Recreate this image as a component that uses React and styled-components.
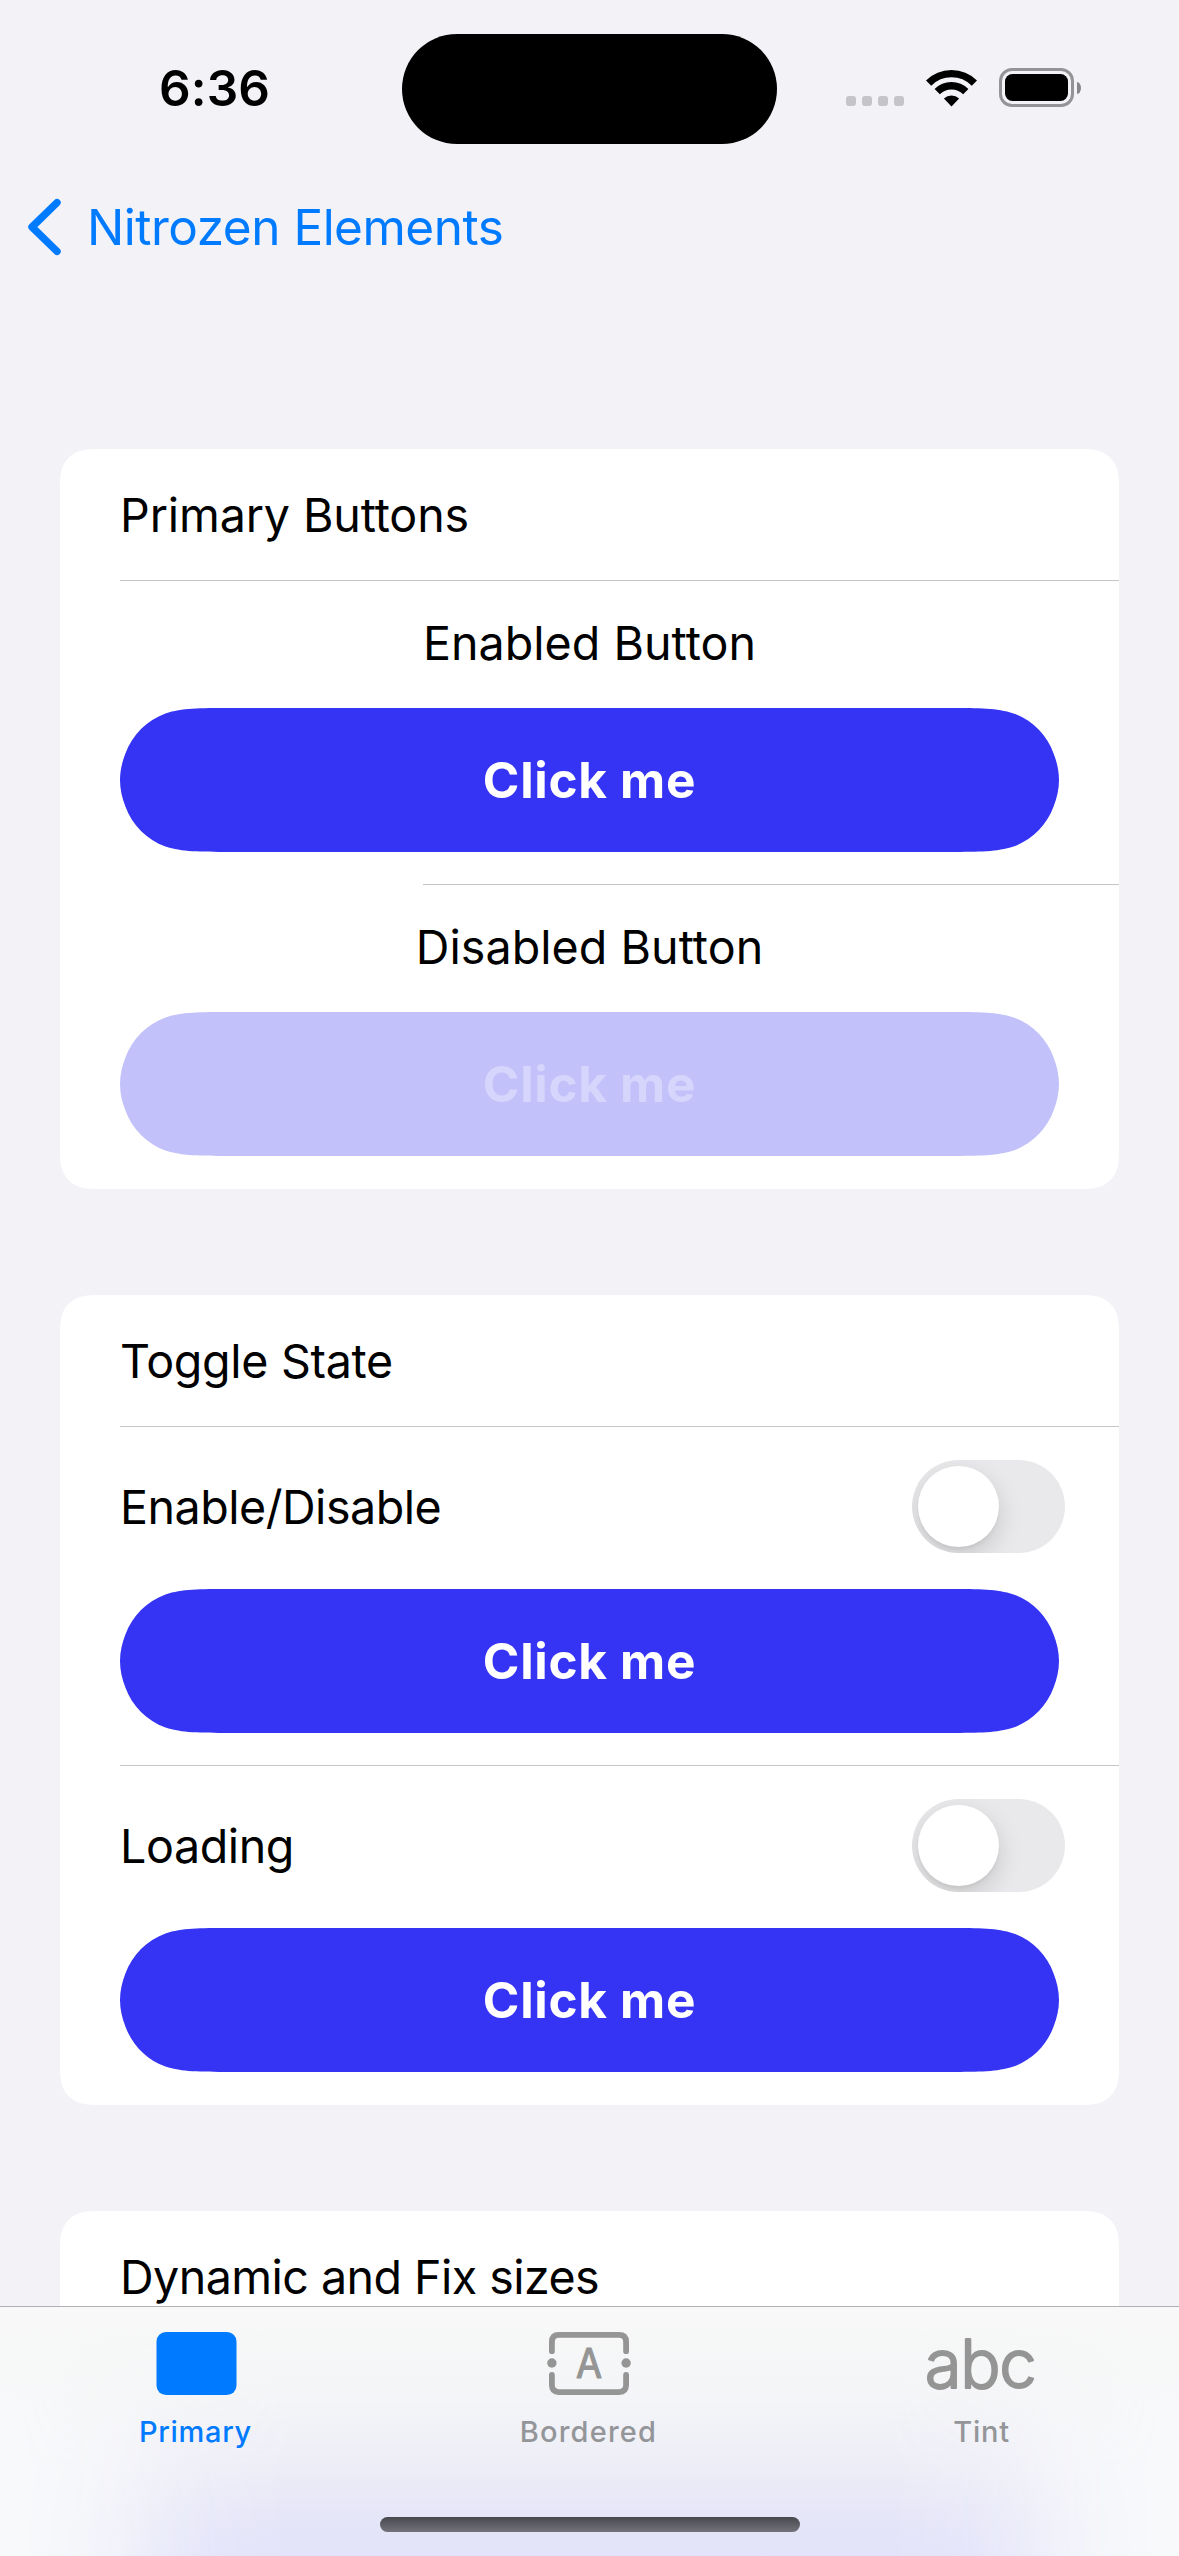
import React, { useState } from "react";
import styled, { createGlobalStyle } from "styled-components";

/* Continuous-corner outline, as iOS draws its rounded rectangles. */
function continuousRect(w, h, r) {
  const e = 1.52866 * r;
  const a = 1.08849 * r;
  const b = 0.86841 * r;
  const c = 0.63149 * r;
  const d = 0.07491 * r;
  const f = 0.37282 * r;
  const g = 0.16906 * r;
  /* A capsule has no room for the long vertical ease, so its ends stay round. */
  const capsule = h / 2 < e;
  const ey = capsule ? h / 2 : e;
  const ay = capsule ? 0.874 * r : a;
  const by = capsule ? 0.749 * r : b;
  const bx = capsule ? 0.0286 * r : 0;
  return [
    `M ${e} 0 L ${w - e} 0`,
    `C ${w - a} 0 ${w - b} 0 ${w - c} ${d}`,
    `C ${w - f} ${g} ${w - g} ${f} ${w - d} ${c}`,
    `C ${w - bx} ${by} ${w} ${ay} ${w} ${ey}`,
    `L ${w} ${h - ey}`,
    `C ${w} ${h - ay} ${w - bx} ${h - by} ${w - d} ${h - c}`,
    `C ${w - g} ${h - f} ${w - f} ${h - g} ${w - c} ${h - d}`,
    `C ${w - b} ${h} ${w - a} ${h} ${w - e} ${h}`,
    `L ${e} ${h}`,
    `C ${a} ${h} ${b} ${h} ${c} ${h - d}`,
    `C ${f} ${h - g} ${g} ${h - f} ${d} ${h - c}`,
    `C ${bx} ${h - by} 0 ${h - ay} 0 ${h - ey}`,
    `L 0 ${ey}`,
    `C 0 ${ay} ${bx} ${by} ${d} ${c}`,
    `C ${g} ${f} ${f} ${g} ${c} ${d}`,
    `C ${b} 0 ${a} 0 ${e} 0 Z`,
  ].join(" ");
}

const GlobalStyle = createGlobalStyle`
  * { box-sizing: border-box; }
  body {
    margin: 0;
    background: #f2f2f7;
    font-family: Inter, "Liberation Sans", sans-serif;
    color: #000;
  }
`;

const Screen = styled.div`
  position: relative;
  width: 1179px;
  height: 2556px;
  overflow: hidden;
  background: #f2f2f7;
`;

const StatusBar = styled.header`
  display: grid;
  grid-template-columns: 402px 375px 1fr;
  align-items: center;
  height: 177px;
`;

const Time = styled.span`
  padding: 0 0 2px 27px;
  text-align: center;
  font-size: 49.5px;
  font-weight: 600;
  line-height: 60px;
  letter-spacing: 0.1px;
`;

const Island = styled.div`
  height: 110px;
  margin-top: 1px;
  border-radius: 55px;
  background: #000;
`;

const StatusIcons = styled.div`
  display: flex;
  align-items: center;
  justify-content: flex-end;
  gap: 22px;
  padding: 0 98px 2px 0;
`;

const SignalDots = styled.div`
  display: flex;
  gap: 6px;
  padding-top: 26px;

  i {
    width: 10px;
    height: 10px;
    border-radius: 3px;
    background: #c5c4c9;
  }
`;

const Battery = styled.div`
  display: flex;
  align-items: center;
  gap: 3px;
`;

const BatteryBody = styled.div`
  width: 75px;
  height: 39px;
  padding: 3px;
  border: 3px solid #949396;
  border-radius: 13px;

  &::before {
    content: "";
    display: block;
    height: 27px;
    border-radius: 7.5px;
    background: #000;
  }
`;

const BatteryTip = styled.div`
  width: 4px;
  height: 12px;
  border-radius: 0 4px 4px 0 / 0 6px 6px 0;
  background: #88878a;
`;

const NavBar = styled.nav`
  display: flex;
  align-items: center;
  height: 100px;
  padding-left: 27px;
`;

const BackLink = styled.button`
  display: flex;
  align-items: center;
  gap: 24px;
  padding: 0;
  border: 0;
  background: none;
  color: #007aff;
  font: 400 49.5px/60px Inter, "Liberation Sans", sans-serif;
  letter-spacing: -0.5px;
`;

const List = styled.main`
  display: flex;
  flex-direction: column;
  gap: 106px;
  padding: 172px 60px 0;
`;

const Card = styled.section`
  height: ${(p) => p.$height}px;
  background: #fff;
  clip-path: path("${(p) => continuousRect(1059, p.$height, 30)}");
`;

const CardTitle = styled.h2`
  height: 131px;
  margin: 0;
  padding-left: 60px;
  font-size: 46.6px;
  font-weight: 400;
  line-height: 132px;
  letter-spacing: ${(p) => p.$tracking}px;
`;

const Separator = styled.div`
  height: 1px;
  margin-left: ${(p) => p.$inset || 60}px;
  background: #c5c5c7;
`;

const ButtonRow = styled.div`
  display: flex;
  flex-direction: column;
  gap: 37px;
  padding: 34px 60px 32px;
`;

const ToggleRow = styled(ButtonRow)`
  gap: 36px;
  padding-top: 33px;
`;

const RowLabel = styled.span`
  font-size: 46.6px;
  line-height: 56px;
  letter-spacing: ${(p) => p.$tracking}px;
  text-align: center;
`;

const ToggleLine = styled.div`
  display: flex;
  align-items: center;
  justify-content: space-between;
  height: 93px;
  margin-right: -6px;
`;

const Switch = styled.button`
  display: flex;
  align-items: center;
  justify-content: ${(p) => (p.$on ? "flex-end" : "flex-start")};
  width: 153px;
  height: 93px;
  padding: 6px;
  overflow: hidden;
  border: 0;
  border-radius: 47px;
  background: ${(p) => (p.$on ? "#34c759" : "#e9e9eb")};
`;

const Knob = styled.span`
  width: 81px;
  height: 81px;
  border-radius: 50%;
  background: #fff;
  box-shadow: 0 9px 24px rgba(0, 0, 0, 0.15), 0 3px 3px rgba(0, 0, 0, 0.04);
`;

const PrimaryButton = styled.button`
  width: 939px;
  height: 144px;
  padding: 0;
  border: 0;
  clip-path: path("${continuousRect(939, 144, 72)}");
  background: ${(p) => (p.disabled ? "#c2c1fa" : "#3634f4")};
  color: ${(p) => (p.disabled ? "#d6d5fc" : "#fff")};
  font: 700 49.5px/60px Inter, "Liberation Sans", sans-serif;
  letter-spacing: 0.7px;
`;

const TabBar = styled.footer`
  position: absolute;
  left: 0;
  right: 0;
  bottom: 0;
  height: 250px;
  border-top: 1px solid #b1b0b4;
  background: linear-gradient(#f8f8f8 0, #f7f8f8 60px, #f8f9fb 140px, #f8f9fb 100%);
  overflow: hidden;

  /* Colour of the content scrolled beneath the bar */
  &::before {
    content: "";
    position: absolute;
    inset: 0;
    background: linear-gradient(
      rgba(245, 245, 246, 0) 20px,
      rgba(242, 243, 246, 0.8) 95px,
      #ededf7 160px,
      #e6e6f8 205px,
      #e2e2fa 249px
    );
    mask-image: linear-gradient(
      to right,
      transparent 20px,
      rgba(0, 0, 0, 0.1) 75px,
      rgba(0, 0, 0, 0.32) 120px,
      rgba(0, 0, 0, 0.64) 165px,
      rgba(0, 0, 0, 0.88) 215px,
      #000 290px,
      #000 889px,
      rgba(0, 0, 0, 0.88) 964px,
      rgba(0, 0, 0, 0.64) 1014px,
      rgba(0, 0, 0, 0.32) 1059px,
      rgba(0, 0, 0, 0.1) 1104px,
      transparent 1159px
    );
  }
`;

const Tabs = styled.div`
  position: relative;
  display: grid;
  grid-template-columns: repeat(3, 1fr);
  height: 210px;
  margin: 0 1px 0 -1px;
`;

const Tab = styled.button`
  display: flex;
  flex-direction: column;
  align-items: center;
  gap: 18px;
  padding: 25px 0 0;
  border: 0;
  background: none;
  color: ${(p) => (p.$active ? "#007aff" : "#949598")};
  font: 500 29px/36px Inter, "Liberation Sans", sans-serif;
  letter-spacing: ${(p) => p.$tracking}px;

  svg {
    display: block;
    height: 64px;
    overflow: visible;
  }
`;

const HomeIndicator = styled.div`
  position: relative;
  width: 420px;
  height: 15px;
  margin: 0 auto;
  border-radius: 8px;
  background: linear-gradient(#47484c, #73727c);
`;

const iconFont = 'Inter, "Liberation Sans", sans-serif';

function WifiIcon() {
  return (
    <svg width="51" height="38" viewBox="0 0 51 38">
      <g fill="none" stroke="#000" strokeWidth="7.4">
        <path d="M2.62 14.12 A32.35 32.35 0 0 1 48.38 14.12" />
        <path d="M11.22 22.72 A20.2 20.2 0 0 1 39.78 22.72" />
      </g>
      <path d="M25.5 37.4 L17.9 29.4 A11.3 11.3 0 0 1 33.1 29.4 Z" fill="#000" />
    </svg>
  );
}

function ChevronIcon() {
  return (
    <svg width="36" height="60" viewBox="0 0 36 60">
      <path
        d="M30 5.6 L5 30 L30 54.4"
        fill="none"
        stroke="#007aff"
        strokeWidth="7.4"
        strokeLinecap="round"
        strokeLinejoin="round"
      />
    </svg>
  );
}

function FilledRectIcon() {
  return (
    <svg width="80" viewBox="0 0 80 64">
      <rect x="0.5" width="80" height="63" rx="9.5" fill="#007aff" />
    </svg>
  );
}

function BorderedIcon() {
  return (
    <svg width="84" viewBox="0 0 84 64">
      <g fill="none" stroke="#949594" strokeWidth="5.8" strokeLinecap="round">
        <path d="M4.9 19.2 V9.9 Q4.9 2.9 11.9 2.9 H72.1 Q79.1 2.9 79.1 9.9 V19.2" />
        <path d="M4.9 42.8 V53.1 Q4.9 60.1 11.9 60.1 H72.1 Q79.1 60.1 79.1 53.1 V42.8" />
      </g>
      <circle cx="4.9" cy="31" r="4.7" fill="#949594" />
      <circle cx="79.1" cy="31" r="4.7" fill="#949594" />
      <text
        transform="translate(42 46.2) scale(0.92 1)"
        textAnchor="middle"
        fontFamily={iconFont}
        fontSize="41"
        fontWeight="400"
        letterSpacing="0"
        fill="#949594"
        stroke="#949594"
        strokeWidth="1.2"
        strokeLinejoin="round"
      >
        A
      </text>
    </svg>
  );
}

function AbcIcon() {
  return (
    <svg width="108" viewBox="0 0 108 64">
      <text
        x="52"
        y="56"
        textAnchor="middle"
        fontFamily={iconFont}
        fontSize="67"
        fontWeight="300"
        letterSpacing="-1.4"
        fill="#949594"
        stroke="#949594"
        strokeWidth="2"
        strokeLinejoin="round"
      >
        abc
      </text>
    </svg>
  );
}

function ToggleSection({ label, tracking }) {
  const [on, setOn] = useState(false);
  return (
    <ToggleRow>
      <ToggleLine>
        <RowLabel $tracking={tracking}>{label}</RowLabel>
        <Switch $on={on} role="switch" aria-checked={on} onClick={() => setOn(!on)}>
          <Knob />
        </Switch>
      </ToggleLine>
      <PrimaryButton>Click me</PrimaryButton>
    </ToggleRow>
  );
}

export default function App() {
  return (
    <Screen>
      <GlobalStyle />
      <StatusBar>
        <Time>6:36</Time>
        <Island />
        <StatusIcons>
          <SignalDots>
            <i />
            <i />
            <i />
            <i />
          </SignalDots>
          <WifiIcon />
          <Battery>
            <BatteryBody />
            <BatteryTip />
          </Battery>
        </StatusIcons>
      </StatusBar>

      <NavBar>
        <BackLink>
          <ChevronIcon />
          <span>Nitrozen Elements</span>
        </BackLink>
      </NavBar>

      <List>
        <Card $height={740}>
          <CardTitle $tracking={-0.12}>Primary Buttons</CardTitle>
          <Separator />
          <ButtonRow>
            <RowLabel $tracking={0.02}>Enabled Button</RowLabel>
            <PrimaryButton>Click me</PrimaryButton>
          </ButtonRow>
          <Separator $inset={363} />
          <ButtonRow>
            <RowLabel $tracking={0.05}>Disabled Button</RowLabel>
            <PrimaryButton disabled>Click me</PrimaryButton>
          </ButtonRow>
        </Card>

        <Card $height={810}>
          <CardTitle $tracking={-0.3}>Toggle State</CardTitle>
          <Separator />
          <ToggleSection label="Enable/Disable" tracking={-0.5} />
          <Separator />
          <ToggleSection label="Loading" tracking={-0.4} />
        </Card>

        <Card $height={345}>
          <CardTitle $tracking={-0.55}>Dynamic and Fix sizes</CardTitle>
          <Separator />
        </Card>
      </List>

      <TabBar>
        <Tabs>
          <Tab $active $tracking={0.7}>
            <FilledRectIcon />
            Primary
          </Tab>
          <Tab $tracking={1.2}>
            <BorderedIcon />
            Bordered
          </Tab>
          <Tab $tracking={0.75}>
            <AbcIcon />
            Tint
          </Tab>
        </Tabs>
        <HomeIndicator />
      </TabBar>
    </Screen>
  );
}
